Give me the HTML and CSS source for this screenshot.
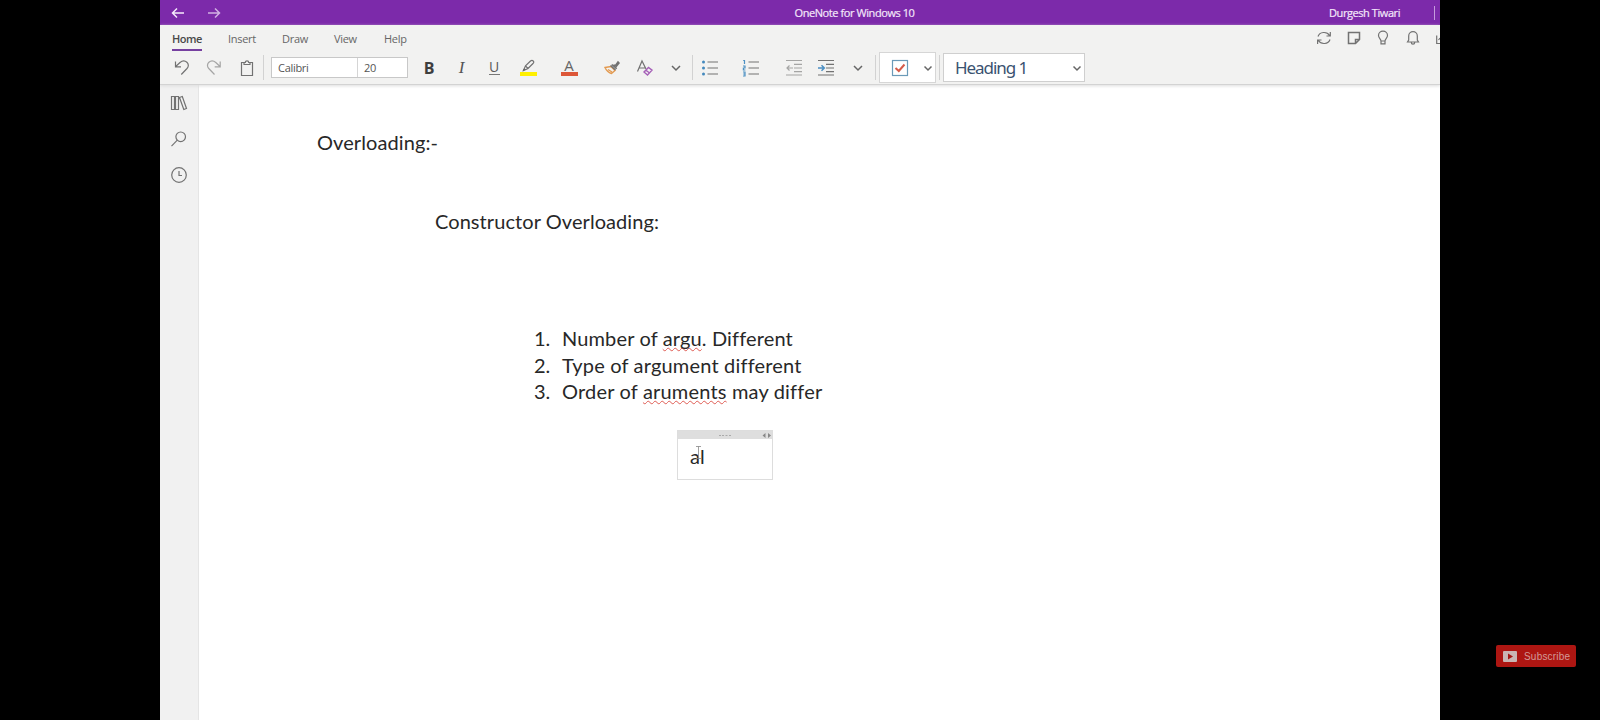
FILE: index.html
```html
<!DOCTYPE html>
<html lang="en">
<head>
<meta charset="utf-8">
<title>OneNote for Windows 10</title>
<link rel="stylesheet" href="styles.css">
</head>
<body>
<main class="window">
  <header class="titlebar">
    <nav class="history">
      <svg width="14" height="12" viewBox="0 0 14 12"><path d="M13 6H1.5M6 1.5L1.5 6L6 10.5"/></svg>
      <svg class="faded" width="14" height="12" viewBox="0 0 14 12"><path d="M1 6H12.5M8 1.5L12.5 6L8 10.5"/></svg>
    </nav>
    <span class="app-name">OneNote for Windows 10</span>
    <span class="account"><span class="user">Durgesh Tiwari</span></span>
  </header>

  <section class="ribbon">
    <div class="tabs-row">
      <nav class="tabs">
        <a class="tab active">Home</a><a class="tab t-insert">Insert</a><a class="tab t-draw">Draw</a><a class="tab t-view">View</a><a class="tab t-help">Help</a>
      </nav>
      <div class="tools">
        <svg width="16" height="16" viewBox="0 0 16 16"><path d="M2 6.5A6.2 5.5 0 0 1 13.5 5.5M14 9.5A6.2 5.5 0 0 1 2.5 10.5M14.3 2V6H10.5M1.6 14V10H5.5"/></svg>
        <svg width="16" height="16" viewBox="0 0 16 16"><path class="thick" d="M2.5 2.5H13.5V9.5L9.5 13.5H2.5ZM13.5 9.5H9.5V13.5"/></svg>
        <svg width="16" height="16" viewBox="0 0 16 16"><path d="M6 11C6 9 3.5 8 3.5 5.5A4.5 4.3 0 0 1 12.5 5.5C12.5 8 10 9 10 11ZM6 11V13.8H10V11"/></svg>
        <svg width="16" height="16" viewBox="0 0 16 16"><path d="M2.5 12H13.5L12.3 10V6A4.3 4.3 0 0 0 3.7 6V10ZM6.3 12.5A1.7 1.7 0 0 0 9.7 12.5"/></svg>
        <svg class="cut" width="4" height="16" viewBox="0 0 4 16"><path d="M.7 5.5V13.5H4M2.5 10L4 8"/></svg>
      </div>
    </div>
    <div class="toolbar">
      <svg width="18" height="18" viewBox="0 0 18 18"><path d="M2.5 2.5V7.8H8M2.7 7.5L7 3.5C12-.5 18 5 14 9.5L8.3 15.5"/></svg>
      <svg class="disabled" width="18" height="18" viewBox="0 0 18 18"><path d="M15.2 2.5V7.8H9.7M15 7.5L10.8 3.5C5.8-.5-.2 5 3.8 9.5L9.5 15.5"/></svg>
      <svg width="18" height="18" viewBox="0 0 18 18"><path d="M6 3.5H3.5V16.5H14.5V3.5H12M6 5.5V3.5H7.3C7.3 1.2 10.7 1.2 10.7 3.5H12V5.5Z"/></svg>
      <i class="sep"></i><i></i>
      <div class="font-box"><span class="family">Calibri</span><span class="size">20</span></div>
      <i></i>
      <b class="bold">B</b>
      <em class="italic">I</em>
      <span class="underline">U</span>
      <svg width="18" height="18" viewBox="0 0 18 18"><path d="M4.500 11.500L6.500 6.800L11.500 2Q13 .8 14.200 2T14 4.500L9 9.500ZM6.500 6.800L9 9.500"/><path d="M3.500 11.800L5 9.500L7 10.800Z" fill="#666"/><rect x="1" y="13" width="17" height="4" fill="#fff000"/></svg>
      <span class="font-color">A</span>
      <svg width="18" height="18" viewBox="0 0 18 18"><path class="orange" d="M2 8.500L8 7.500L12 11.500L8.500 14.500Q4 13 2 8.500ZM5 10.500L9 13"/><path class="thick" d="M7.500 6.500L12.500 11M8.800 5.500L13.700 9.800M10.500 6L12.500 6.500L15 3L16 4L12.800 8"/></svg>
      <svg width="18" height="18" viewBox="0 0 18 18"><path d="M1.500 12.500L6 2L10 10M3.200 9H9"/><path class="purple" d="M8 13L12.500 8.500L16 11.200L11.500 16ZM10 11.200L13.500 14"/></svg>
      <svg class="chev" width="12" height="18" viewBox="0 0 12 18"><path d="M2 7L6 11L10 7"/></svg>
      <i class="sep"></i>
      <svg class="bullets" width="18" height="18" viewBox="0 0 18 18"><path d="M6.5 3H17M6.5 9H17M6.5 15H17"/><g fill="#4489bd"><circle cx="2.500" cy="3" r="1.500"/><circle cx="2.500" cy="9" r="1.500"/><circle cx="2.500" cy="15" r="1.500"/></g></svg>
      <svg width="18" height="18" viewBox="0 0 18 18"><path d="M6.5 3H17M6.5 9H17M6.5 15H17"/><path class="blue" d="M1.2 1.5H2.5V5M1 7H3V9H1.4V11H3.4M1 13H3V17H1M1.2 15H3"/></svg>
      <svg class="disabled" width="18" height="18" viewBox="0 0 18 18"><path d="M1 1.5H17M9 5.3H17M9 9H17M9 12.7H17M1 16H17M2 9H8M4.5 6.5L2 9L4.5 11.5"/></svg>
      <svg width="18" height="18" viewBox="0 0 18 18"><path d="M1 1.5H17M9 5.3H17M9 9H17M9 12.7H17M1 16H17"/><path class="blue thick" d="M1 9H7M4.5 6.3L7.3 9L4.5 11.7"/></svg>
      <svg class="chev" width="12" height="18" viewBox="0 0 12 18"><path d="M3 7L7 11L11 7"/></svg>
      <i class="sep"></i><i></i>
      <div class="todo">
        <svg width="18" height="18" viewBox="0 0 18 18"><rect x="1.5" y="1.5" width="15" height="15" fill="#fff" stroke="#6a9ab8"/><path class="red" d="M4.5 9L7.8 12L13.5 5.5"/></svg>
        <svg class="chev" width="12" height="18" viewBox="0 0 12 18"><path d="M2.5 7.500L6 11L9.500 7.500"/></svg>
      </div>
      <i></i><i class="sep"></i><i></i>
      <div class="style-box"><span class="style-name">Heading 1</span>
        <svg class="chev" width="12" height="18" viewBox="0 0 12 18"><path d="M2.500 7.500L6 11L9.500 7.500"/></svg>
      </div>
    </div>
  </section>

  <div class="workspace">
    <aside class="sidebar">
      <svg width="18" height="18" viewBox="0 0 18 18"><path d="M1.500 2.500H4.500V15.500H1.500ZM5.500 2.500H8.500V15.500H5.500ZM9.500 3.500L12.300 2.500L16.500 14.500L13.800 15.500Z"/></svg>
      <svg width="18" height="18" viewBox="0 0 18 18"><circle cx="10.700" cy="6.800" r="4.800"/><path d="M7.300 10.200L1.500 16.200"/></svg>
      <svg width="18" height="18" viewBox="0 0 18 18"><circle cx="9" cy="9" r="7.300"/><path d="M9 5V9.500H12"/></svg>
    </aside>
    <article class="page">
      <p class="note line-one">Overloading:-</p>
      <p class="note line-two">Constructor Overloading:</p>
      <ol class="note list">
        <li><span class="num">1.</span><span class="item-a">Number of <span class="typo">argu</span>. Different</span></li>
        <li><span class="num">2.</span><span class="item-b">Type of argument different</span></li>
        <li><span class="num">3.</span><span class="item-c">Order of <span class="typo">aruments</span> may differ</span></li>
      </ol>
      <div class="container">
        <div class="handle">
          <svg width="94" height="8" viewBox="0 0 94 8"><path d="M41 4.500H43M44 4.500H46M47.500 4.500H49.500M51 4.500H53" stroke="#aaa"/><path d="M87.500 2L84.500 4.500L87.500 7ZM90 2L93 4.500L90 7Z" fill="#888"/></svg>
        </div>
        <div class="note typing">al<svg class="ibeam" width="7" height="13" viewBox="0 0 7 13"><path d="M1 .5H6M3.500 .5V12.500M1 12.500H6"/></svg></div>
      </div>
    </article>
  </div>
</main>
<aside class="overlay">
  <button class="subscribe"><svg width="14" height="11" viewBox="0 0 14 11"><rect width="14" height="11" rx="1" fill="#c9b5b3"/><path d="M5 2.500L10 5.500L5 8.500Z" fill="#a51713"/></svg><span>Subscribe</span></button>
</aside>
</body>
</html>
```

FILE: styles.css
```css
* { box-sizing: border-box; }
body {
  margin: 0;
  height: 720px;
  padding-left: 160px;
  display: flex;
  background: #000;
  overflow: hidden;
  font-family: "Open Sans", "Noto Sans", sans-serif;
}
.window {
  width: 1280px;
  height: 720px;
  display: flex;
  flex-direction: column;
  background: #fff;
  overflow: hidden;
}
svg { display: block; fill: none; stroke: #727272; stroke-width: 1.2; flex: none; }
svg [fill]:not([stroke]) { stroke: none; }
.thick { stroke-width: 1.5; }
.orange { stroke: #e39a50; stroke-width: 1.4; }
.purple { stroke: #a661b8; stroke-width: 1.4; }
.blue { stroke: #4b8fc3; }
.red { stroke: #d55b49; stroke-width: 2; }
.disabled { opacity: .6; }
.chev { stroke: #666; stroke-width: 1.5; }

.titlebar {
  height: 25px;
  flex: none;
  display: grid;
  grid-template-columns: 1fr auto 1fr;
  align-items: center;
  background: #7c2aaa;
  color: #f4e8fa;
  font-size: 11px;
}
.history { display: flex; gap: 22px; padding-left: 11px; }
.history svg { stroke: #f6eafc; stroke-width: 1.5; }
.history .faded { opacity: .7; }
.app-name { position: relative; left: 54.5px; letter-spacing: -.42px; line-height: 25px; -webkit-text-stroke: .2px; }
.account {
  display: flex;
  justify-content: flex-end;
  padding-right: 5px;
}
.user { padding-right: 34px; border-right: 1px solid #c69bdd; letter-spacing: -.43px; line-height: 14px; -webkit-text-stroke: .2px; }

.ribbon {
  height: 60px;
  flex: none;
  background: #f2f2f1;
  border-bottom: 1px solid #d3d3d3;
  box-shadow: 0 1px 3px #ddd;
  z-index: 1;
}
.tabs-row { height: 26px; display: flex; justify-content: space-between; }
.tabs { display: flex; padding-left: 12px; font-size: 11px; color: #666; }
.tab { height: 26px; line-height: 27px; margin-right: 26px; letter-spacing: -.3px; }
.active { width: 30px; border-bottom: 2px solid #7640a0; color: #484848; font-weight: 600; letter-spacing: -.5px; }
.t-insert { width: 28px; }
.t-draw { width: 26px; }
.t-view { width: 24px; }
.t-help { width: 24px; }
.tools { display: flex; gap: 13.8px; padding-top: 5px; }
.tools svg { position: relative; left: -1px; }
.tools .cut { left: 0; margin-left: 0; }

.toolbar {
  height: 33px;
  padding-left: 6px;
  display: grid;
  grid-template-columns: 32px 32px 33px 1px 7px 137px 5px 32px 33px 32px 35px 48px 37px 29px 33px 1px 35px 46px 39px 26px 36px 1px 3px 57px 3px 1px 3px 142px;
  align-items: center;
  justify-items: center;
}
.bullets { margin-right: 2px; }
.sep { width: 1px; height: 25px; background: #d2d2d2; }
.font-box {
  width: 137px;
  height: 21px;
  display: flex;
  background: #fff;
  border: 1px solid #c8c8c8;
  font-size: 11px;
  line-height: 19px;
  letter-spacing: -.3px;
  color: #555;
}
.family { width: 86px; padding-left: 6px; border-right: 1px solid #d5d5d5; }
.size { padding-left: 6px; }
.bold { font-size: 16px; line-height: 24px; color: #3e3e3e; }
.italic { font: italic 17px "Liberation Serif", serif; color: #555; }
.underline { font-size: 14px; line-height: 14px; width: 11px; text-align: center; border-bottom: 1px solid #777; color: #5a5a5a; }
.font-color { width: 17px; height: 17px; font-size: 15px; line-height: 12px; text-align: center; border-bottom: 4px solid #dd5738; color: #666; }
.todo {
  width: 57px;
  height: 31px;
  display: flex;
  align-items: center;
  justify-content: space-between;
  padding: 0 1px 0 11px;
  background: #fff;
  border: 1px solid #d6d6d6;
}
.style-box {
  width: 142px;
  height: 29px;
  display: flex;
  align-items: center;
  justify-content: space-between;
  padding: 0 1px 0 11px;
  background: #fff;
  border: 1px solid #cfcfcf;
  color: #3a5270;
  font: 17px "Noto Sans", sans-serif;
}
.style-name { letter-spacing: -1.05px; }

.workspace { flex: 1; display: flex; }
.sidebar {
  width: 39px;
  padding: 8.5px 0 0 10px;
  display: flex;
  flex-direction: column;
  gap: 18.2px;
  background: #f1f1f1;
  border-right: 1px solid #e5e5e5;
}
.page { flex: 1; padding: 44px 0 0 118px; }
.note { margin: 0; color: #282828; font-family: Lato, "Open Sans", sans-serif; font-size: 20px; line-height: 26px; }
.line-one { letter-spacing: .1px; }
.line-two { margin: 53px 0 0 118px; letter-spacing: .07px; }
.list { margin: 91px 0 0 217px; padding: 0; list-style: none; line-height: 26.5px; }
.list li { display: flex; }
.num { width: 28px; }
.item-a { letter-spacing: .14px; }
.item-b { letter-spacing: .18px; }
.item-c { letter-spacing: .18px; }
.typo { text-decoration: underline wavy #df5c54 1px; text-underline-offset: 1px; text-decoration-skip-ink: none; }
.container { width: 96px; height: 50px; margin: 25px 0 0 360px; border: 1px solid #ddd; }
.handle { height: 8px; background: #dedede; }
.typing { position: relative; padding: 4px 0 0 12px; }
.ibeam { position: absolute; left: 17px; top: 7px; stroke: #888; stroke-width: .8; }

.overlay { flex: 1; display: flex; align-items: flex-end; padding: 0 0 53px 56px; }
.subscribe {
  width: 80px;
  height: 22px;
  display: flex;
  align-items: center;
  gap: 7px;
  padding: 0 7px;
  border: 0;
  border-radius: 2px;
  background: #ad1612;
  color: #d39a98;
  font: 10px "Liberation Sans", sans-serif;
  letter-spacing: .2px;
}
```
